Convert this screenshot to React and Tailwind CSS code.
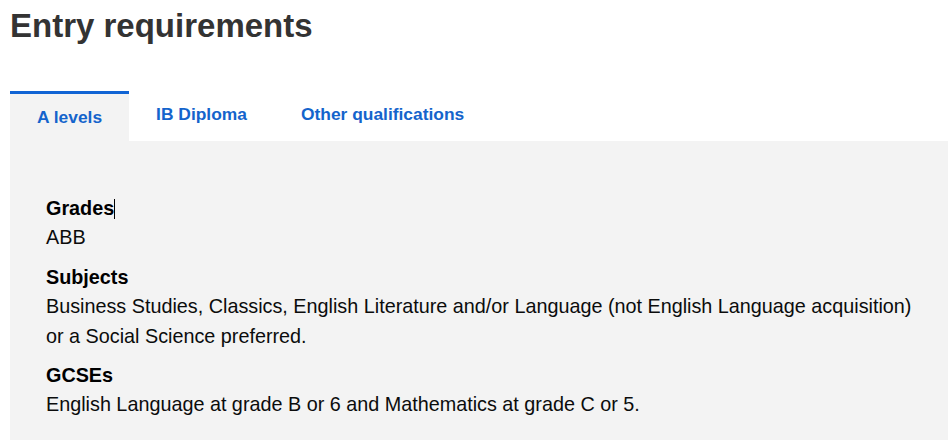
export default function App() {
  const sections = [
    { title: 'Grades', body: 'ABB', caret: true },
    {
      title: 'Subjects',
      body: 'Business Studies, Classics, English Literature and/or Language (not English Language acquisition) or a Social Science preferred.',
    },
    { title: 'GCSEs', body: 'English Language at grade B or 6 and Mathematics at grade C or 5.' },
  ]

  const tabs = ['A levels', 'IB Diploma', 'Other qualifications']

  return (
    <div className="w-[948px] h-[440px] bg-white pl-[10px] pt-[6px] overflow-hidden font-['Liberation_Sans',Arial,sans-serif]">
      <h1 className="text-[33px] leading-[40px] font-bold text-[#333333] mb-[45px]">Entry requirements</h1>

      {/* Tabs */}
      <div className="flex items-start">
        {tabs.map((tab, i) => (
          <div
            key={tab}
            className={
              i === 0
                ? 'h-[50px] px-[27px] pt-[11px] border-t-[3px] border-[#1064d4] bg-[#f3f3f3] text-[17.4px] leading-[24px] font-bold text-[#1464cc] cursor-pointer'
                : 'px-[27px] pt-[11px] text-[17.4px] leading-[24px] font-bold text-[#1464cc] cursor-pointer'
            }
          >
            {tab}
          </div>
        ))}
      </div>

      {/* Panel */}
      <div className="bg-[#f3f3f3] h-[300px] pl-[36px] pr-[25px] pt-[53px] text-[19.8px] leading-[29.4px] text-[#0b0c0c]">
        {sections.map((s) => (
          <div key={s.title} className="mb-[10px]">
            <h3 className="font-bold text-black">
              {s.title}
              {s.caret && <span className="inline-block w-px h-[20px] bg-black align-[-4px]" />}
            </h3>
            <p>{s.body}</p>
          </div>
        ))}
      </div>
    </div>
  )
}
